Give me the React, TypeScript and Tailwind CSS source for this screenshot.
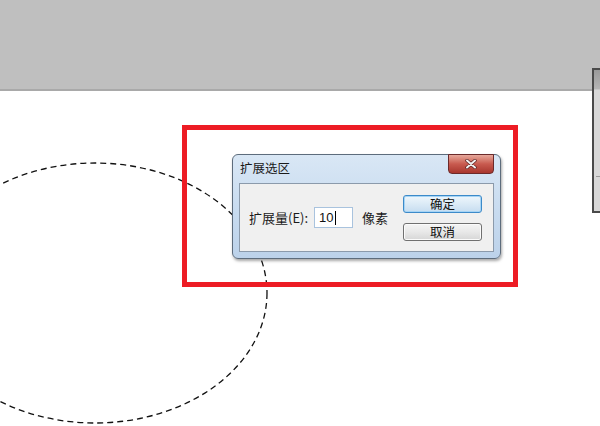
import React from "react";

const cjk = { fontFamily: '"Noto Sans CJK SC", "Noto Sans", sans-serif' };

export default function App() {
  return (
    <div className="w-[600px] h-[426px] overflow-hidden bg-white flex flex-col" style={cjk}>
      <div className="h-[91px] shrink-0 bg-[#bfbfbf] border-b-2 border-[#a9a9a9]" />
      <div className="relative flex-1 bg-white">
        {/* dashed marquee selection */}
        <svg className="absolute left-0 top-0" width="600" height="335" viewBox="0 0 600 335">
          <ellipse cx="95" cy="202" rx="172" ry="130" fill="none" stroke="#111" strokeWidth="1.3" strokeDasharray="6 4" />
        </svg>

        {/* partial panel at right */}
        <div className="absolute left-[592px] top-[-23px] w-[20px] h-[145px] border-2 border-[#4a4a4a] bg-[#d8d8d8] flex flex-col">
          <div className="h-[20px] bg-gradient-to-b from-[#9a9a9a] to-[#b5b5b5] border-b border-[#c8c8c8]" />
          <div className="flex-1" />
          <div className="h-px bg-[#9a9a9a] ml-[2px] mb-[34px]" />
        </div>

        {/* red annotation frame */}
        <div className="absolute left-[182px] top-[34px] w-[336px] h-[162px] border-[5px] border-[#ed1c24]" />

        {/* dialog */}
        <div className="absolute left-[232px] top-[63px] w-[269px] h-[105px] rounded-[6px] border border-[#5d6c7c] bg-gradient-to-b from-[#d9e7f5] via-[#c9dcf0] to-[#bcd2ea] shadow-[1px_2px_3px_rgba(0,0,0,0.35)] flex flex-col px-[6px] pb-[6px]">
          <div className="h-[28px] flex items-start justify-between shrink-0">
            <span className="pt-[5px] pl-[1px] text-[12.5px] leading-[16px] text-[#1a1a1a]">扩展选区</span>
            <div className="w-[46px] h-[20px] mt-[-1px] rounded-b-[4px] border border-[#6b2a2a] bg-gradient-to-b from-[#e6a89c] via-[#c85a4f] to-[#a8362e] flex items-center justify-center">
              <svg width="12" height="10" viewBox="0 0 12 10">
                <path d="M2 1.5 L10 8.5 M10 1.5 L2 8.5" stroke="#5a2020" strokeWidth="3.4" strokeLinecap="round" />
                <path d="M2 1.5 L10 8.5 M10 1.5 L2 8.5" stroke="#f2f2f2" strokeWidth="2" strokeLinecap="round" />
              </svg>
            </div>
          </div>
          <div className="flex-1 bg-[#f0f0f0] border border-[#8b9aab] flex items-center pl-[9px] pr-[11px]">
            <span className="text-[13px] leading-[16px] text-[#1a1a1a] whitespace-nowrap">扩展量(E):</span>
            <div className="ml-[6px] w-[39px] h-[21px] bg-white border border-[#a9c3de] flex items-center pl-[4px]">
              <span className="text-[13px] leading-[16px] text-[#111]" style={{ fontFamily: '"Liberation Sans", Arial, sans-serif' }}>10</span>
              <span className="ml-[1px] w-px h-[14px] bg-black" />
            </div>
            <span className="ml-[9px] text-[13px] leading-[16px] text-[#1a1a1a]">像素</span>
            <div className="ml-auto flex flex-col gap-[10px]">
              <div className="w-[79px] h-[18px] rounded-[3px] border border-[#3c8ac9] bg-gradient-to-b from-[#eef6fc] via-[#dbeaf6] to-[#c6ddf0] shadow-[inset_0_0_0_1px_#a6d4f5] flex items-center justify-center text-[12.5px] leading-[14px] text-[#111]">
                确定
              </div>
              <div className="w-[79px] h-[18px] rounded-[3px] border border-[#707070] bg-gradient-to-b from-[#f4f4f4] via-[#e8e8e8] to-[#d6d6d6] shadow-[inset_0_0_0_1px_#fbfbfb] flex items-center justify-center text-[12.5px] leading-[14px] text-[#111]">
                取消
              </div>
            </div>
          </div>
        </div>
      </div>
    </div>
  );
}
